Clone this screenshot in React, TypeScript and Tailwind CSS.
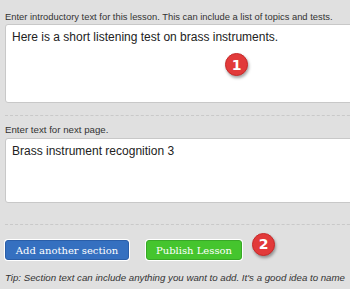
export default function App() {
  return (
    <div className="h-[289px] w-[350px] overflow-hidden bg-[#e0e0e0] pl-[5px] font-['Liberation_Sans',Arial,sans-serif] text-[#333]">
      <div className="w-[360px]">
        <div className="whitespace-nowrap pt-[11px] text-[9.4px] leading-[12px]">
          Enter introductory text for this lesson. This can include a list of topics and tests.
        </div>
        <div className="relative mt-[1px] h-[79px] rounded-[3px] border border-[#c8c8c8] bg-white px-[6px] pt-[4px] text-[12px] leading-[16px] text-[#222]">
          Here is a short listening test on brass instruments.
          <Badge n="1" className="left-[219px] top-[28px]" />
        </div>
        <div className="mt-[12px] border-t border-dashed border-[#c9c9c9]" />
        <div className="pt-[8px] text-[9.7px] leading-[12px]">Enter text for next page.</div>
        <div className="mt-[2px] h-[65px] rounded-[3px] border border-[#c8c8c8] bg-white px-[6px] pt-[4px] text-[12px] leading-[16px] text-[#222]">
          Brass instrument recognition 3
        </div>
        <div className="mt-[21px] border-t border-dashed border-[#c9c9c9]" />
        <div className="mt-[14px] flex items-center">
          <button className="h-[20px] w-[124px] rounded-[3px] border border-[#2a5ea8] bg-[#3570c0] font-['DejaVu_Serif',serif] text-[10px] text-white shadow-[0_0_0_1px_#fff]">
            Add another section
          </button>
          <button className="ml-[17px] h-[20px] w-[96px] rounded-[3px] border border-[#38a826] bg-[#45c52e] font-['DejaVu_Serif',serif] text-[10px] text-white shadow-[0_0_0_1px_#fff]">
            Publish Lesson
          </button>
          <div className="relative ml-[10px] h-[22px] w-[22px]">
            <Badge n="2" className="left-0 top-[-6px]" />
          </div>
        </div>
        <div className="mt-[11px] whitespace-nowrap text-[9.7px] italic leading-[12px]">
          Tip: Section text can include anything you want to add. It's a good idea to name
        </div>
      </div>
    </div>
  );
}

function Badge({ n, className }: { n: string; className: string }) {
  return (
    <span
      className={`absolute flex h-[23px] w-[23px] items-center justify-center rounded-full border border-[#c72a2a] bg-[#e23a3a] font-['DejaVu_Sans',sans-serif] text-[14px] font-bold text-white shadow-[1px_2px_3px_rgba(0,0,0,0.35)] ${className}`}
    >
      {n}
    </span>
  );
}
